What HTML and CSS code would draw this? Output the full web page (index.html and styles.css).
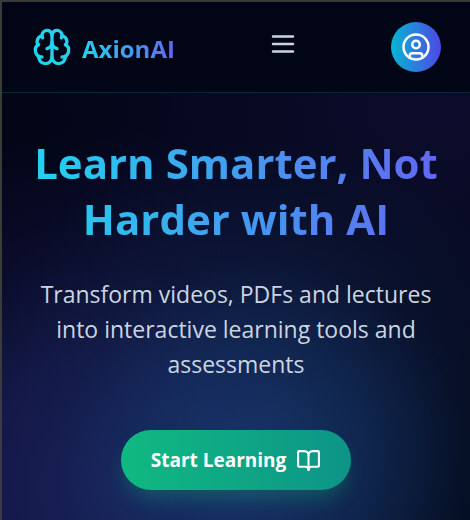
FILE: index.html
```html
<!DOCTYPE html>
<html lang="en">
<head>
<meta charset="utf-8">
<meta name="viewport" content="width=device-width, initial-scale=1">
<title>AxionAI</title>
<link rel="stylesheet" href="styles.css">
</head>
<body>
<header class="header">
  <a class="brand" href="#">
    <svg class="icon icon-brand" viewBox="0 0 24 24" aria-hidden="true"><path d="M12 18V5"/><path d="M15 13a4.17 4.17 0 0 1-3-4 4.17 4.17 0 0 1-3 4"/><path d="M17.598 6.5A3 3 0 1 0 12 5a3 3 0 1 0-5.598 1.5"/><path d="M17.997 5.125a4 4 0 0 1 2.526 5.77"/><path d="M18 18a4 4 0 0 0 2-7.464"/><path d="M19.967 17.483A4 4 0 1 1 12 18a4 4 0 1 1-7.967-.517"/><path d="M6 18a4 4 0 0 1-2-7.464"/><path d="M6.003 5.125a4 4 0 0 0-2.526 5.77"/></svg>
    <span class="brand-name">AxionAI</span>
  </a>
  <button class="menu-button" type="button" aria-label="Menu">
    <svg class="icon icon-menu" viewBox="0 0 24 24" aria-hidden="true"><path d="M4 6h16M4 12h16M4 18h16"/></svg>
  </button>
  <button class="profile-button" type="button" aria-label="Profile">
    <svg class="icon icon-profile" viewBox="0 0 24 24" aria-hidden="true"><circle cx="12" cy="12" r="10"/><circle cx="12" cy="10" r="3"/><path d="M7 20.662V19a2 2 0 0 1 2-2h6a2 2 0 0 1 2 2v1.662"/></svg>
  </button>
</header>
<main class="hero">
  <h1 class="title">Learn Smarter, Not Harder with AI</h1>
  <p class="lead">Transform videos, PDFs and lectures into interactive learning tools and assessments</p>
  <button class="start-button" type="button">
    <span>Start Learning</span>
    <svg class="icon icon-book" viewBox="0 0 24 24" aria-hidden="true"><path d="M12 7v14"/><path d="M3 18a1 1 0 0 1-1-1V4a1 1 0 0 1 1-1h5a4 4 0 0 1 4 4 4 4 0 0 1 4-4h5a1 1 0 0 1 1 1v13a1 1 0 0 1-1 1h-6a3 3 0 0 0-3 3 3 3 0 0 0-3-3z"/></svg>
  </button>
</main>
</body>
</html>
```
FILE: styles.css
```css
* {
  box-sizing: border-box;
}

body {
  display: flex;
  flex-direction: column;
  min-height: 100vh;
  margin: 0;
  border-top: 2px solid #3b3b3b;
  border-left: 2px solid #3b3b3b;
  background:
    radial-gradient(circle at 56% 88%, rgba(24, 66, 120, 0.7), rgba(20, 60, 108, 0.52) 110px, rgba(14, 44, 76, 0.26) 200px, transparent 320px),
    radial-gradient(circle at 24% 94%, rgba(42, 42, 128, 0.64), rgba(38, 36, 116, 0.52) 130px, rgba(34, 28, 98, 0.28) 230px, transparent 360px),
    radial-gradient(circle at 92% 18%, rgba(26, 22, 76, 0.4), transparent 380px),
    #020617;
  font-family: "Segoe UI", "Open Sans", "Noto Sans", sans-serif;
}

button {
  border: 0;
  font: inherit;
  cursor: pointer;
}

.icon {
  flex: none;
  fill: none;
  stroke: currentColor;
  stroke-width: 2;
  stroke-linecap: round;
  stroke-linejoin: round;
}

.header {
  display: flex;
  align-items: center;
  justify-content: space-between;
  padding: 20px 29px 20px 30px;
  border-bottom: 1px solid rgba(6, 182, 212, 0.2);
  background: #020515;
}

.brand {
  display: flex;
  align-items: center;
  gap: 10px;
  color: #22d3ee;
  text-decoration: none;
}

.icon-brand {
  width: 40px;
  height: 40px;
}

.brand-name,
.title {
  background: linear-gradient(to right, #22d3ee, #6366f1);
  background-clip: text;
  -webkit-background-clip: text;
  color: transparent;
  font-weight: 700;
}

.brand-name {
  padding-top: 2px;
  font-size: 24px;
  line-height: 35px;
}

.menu-button {
  align-self: flex-start;
  padding: 7px 0;
  background: none;
  color: #cbd5e1;
}

.icon-menu,
.icon-profile {
  display: block;
  width: 30px;
  height: 30px;
}

.profile-button {
  padding: 10px;
  border-radius: 50%;
  background: linear-gradient(to right, #06b6d4, #4f46e5);
  color: #fff;
}

.hero {
  display: flex;
  flex-direction: column;
  align-items: center;
  padding: 42px 30px 30px;
  text-align: center;
}

.title {
  margin: 0 0 30px;
  font-size: 42px;
  line-height: 56px;
}

.lead {
  margin: 0 0 48px;
  color: #cbd5e1;
  font-size: 23px;
  line-height: 35px;
}

.start-button {
  display: flex;
  align-items: center;
  gap: 10px;
  padding: 16px 30px;
  border-radius: 30px;
  background: linear-gradient(to right, #10b981, #0d9488);
  box-shadow: 0 12px 20px -4px rgba(16, 185, 129, 0.3);
  color: #fff;
  font-size: 19px;
  font-weight: 700;
  line-height: 28px;
}

.icon-book {
  width: 25px;
  height: 25px;
}
```
